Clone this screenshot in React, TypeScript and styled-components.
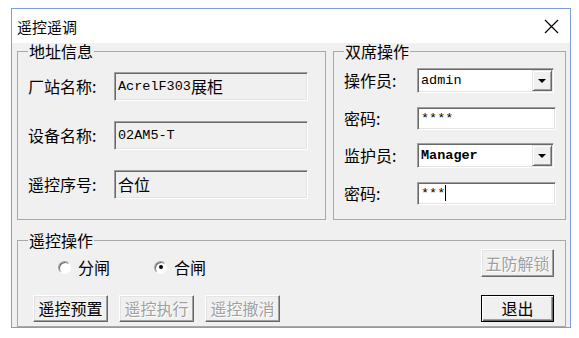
import styled, { createGlobalStyle } from "styled-components";

const GlobalStyle = createGlobalStyle`
  body {
    margin: 0;
    background: #fff;
    font-family: "Noto Sans CJK SC", "Liberation Sans", sans-serif;
  }
`;

const Window = styled.div`
  margin: 8px 0 0 11px;
  width: 560px;
  height: 320px;
  box-sizing: border-box;
  border: 1px solid #7d9be0;
  display: flex;
  flex-direction: column;
  overflow: hidden;
`;

const TitleBar = styled.div`
  height: 34px;
  flex: none;
  background: #fff;
  display: flex;
  align-items: center;
  justify-content: space-between;
  padding: 0 11px 0 5px;
  font-size: 15px;
  color: #000;
`;

const Body = styled.div`
  flex: 1;
  min-height: 0;
  background: #f0f0f0;
  padding: 0 4px 0 5px;
  display: flex;
  flex-direction: column;
  gap: 12px;
`;

const TopRow = styled.div`
  display: flex;
  gap: 7px;
  height: 177px;
  flex: none;
`;

const Group = styled.fieldset<{ $width?: number; $height: number; $pad: string }>`
  margin: 0;
  box-sizing: border-box;
  width: ${(p) => (p.$width ? `${p.$width}px` : "auto")};
  flex: ${(p) => (p.$width ? "none" : "1")};
  height: ${(p) => p.$height}px;
  border: 1px solid #a8a8a8;
  padding: ${(p) => p.$pad};
  min-width: 0;
`;

const Legend = styled.legend`
  padding: 0 1px;
  margin: 0;
  font-size: 16px;
  line-height: 17px;
  color: #000;
`;

const Rows = styled.div<{ $gap: number }>`
  display: flex;
  flex-direction: column;
  gap: ${(p) => p.$gap}px;
`;

const Row = styled.div<{ $h: number }>`
  display: flex;
  align-items: center;
  height: ${(p) => p.$h}px;
`;

const Label = styled.div<{ $w: number }>`
  width: ${(p) => p.$w}px;
  flex: none;
  font-size: 16px;
  line-height: 19px;
  color: #000;
  white-space: nowrap;
`;

const Sunken = styled.div<{ $w: number; $h: number; $bg: string }>`
  width: ${(p) => p.$w}px;
  height: ${(p) => p.$h}px;
  box-sizing: border-box;
  border: 1px solid;
  border-color: #a0a0a0 #fff #fff #a0a0a0;
  box-shadow: inset 1px 1px 0 #696969, inset -1px -1px 0 #e3e3e3;
  background: ${(p) => p.$bg};
  display: flex;
  align-items: center;
  padding: 1px 1px 1px 3px;
  font-family: "Liberation Mono", "Noto Sans CJK SC", monospace;
  font-size: 13.5px;
  color: #000;
  white-space: nowrap;
`;

const Cjk = styled.span`
  font-family: "Noto Sans CJK SC", sans-serif;
  font-size: 16px;
  line-height: 19px;
`;

const Value = styled.span<{ $bold?: boolean }>`
  flex: 1;
  font-weight: ${(p) => (p.$bold ? 700 : 400)};
`;

const Caret = styled.span`
  display: inline-block;
  width: 0;
  height: 16px;
  border-left: 1px solid #000;
  vertical-align: middle;
`;

const DropBtn = styled.div`
  width: 20px;
  height: 100%;
  box-sizing: border-box;
  border: 1px solid;
  border-color: #e3e3e3 #696969 #696969 #e3e3e3;
  box-shadow: inset 1px 1px 0 #fff, inset -1px -1px 0 #a0a0a0;
  background: #f0f0f0;
  display: flex;
  align-items: center;
  justify-content: center;
  &::after {
    content: "";
    border-left: 4px solid transparent;
    border-right: 4px solid transparent;
    border-top: 4px solid #000;
  }
`;

const OpRow = styled.div`
  display: flex;
  justify-content: space-between;
  height: 28px;
`;

const Radios = styled.div`
  align-self: flex-end;
  display: flex;
  gap: 44px;
  padding-left: 30px;
  height: 20px;
  align-items: center;
`;

const RadioItem = styled.label`
  display: flex;
  align-items: center;
  gap: 7px;
  font-size: 16px;
  line-height: 19px;
  color: #000;
`;

const RadioDot = styled.span<{ $on?: boolean }>`
  width: 13px;
  height: 13px;
  box-sizing: border-box;
  border-radius: 50%;
  border: 1px solid;
  border-color: #a0a0a0 #fff #fff #a0a0a0;
  box-shadow: inset 1px 1px 0 #696969;
  background: #fff;
  display: flex;
  align-items: center;
  justify-content: center;
  &::after {
    content: "";
    display: ${(p) => (p.$on ? "block" : "none")};
    width: 4px;
    height: 4px;
    border-radius: 50%;
    background: #000;
  }
`;

const ButtonRow = styled.div`
  display: flex;
  gap: 11px;
  margin-top: 18px;
  padding-left: 5px;
`;

const Button = styled.button<{ $w: number; $h: number; $default?: boolean; $push?: boolean }>`
  width: ${(p) => p.$w}px;
  height: ${(p) => p.$h}px;
  margin-left: ${(p) => (p.$push ? "auto" : "0")};
  box-sizing: border-box;
  padding: 0;
  background: #f0f0f0;
  font-family: "Noto Sans CJK SC", sans-serif;
  font-size: 16px;
  line-height: 19px;
  color: #000;
  border: 1px solid;
  border-color: ${(p) => (p.$default ? "#000" : "#fff #696969 #696969 #fff")};
  box-shadow: ${(p) =>
    p.$default
      ? "inset 1px 1px 0 #fff, inset -1px -1px 0 #696969, inset -2px -2px 0 #a0a0a0"
      : "inset -1px -1px 0 #a0a0a0, inset 1px 1px 0 #e3e3e3"};
  &:disabled {
    color: #a0a0a0;
    text-shadow: 1px 1px 0 #fff;
  }
`;

function CloseIcon() {
  return (
    <svg width="15" height="15" viewBox="0 0 15 15">
      <path d="M1 1 L14 14 M14 1 L1 14" stroke="#000" strokeWidth="1.2" fill="none" />
    </svg>
  );
}

function App() {
  return (
    <>
      <GlobalStyle />
      <Window>
        <TitleBar>
          <span>遥控遥调</span>
          <CloseIcon />
        </TitleBar>
        <Body>
          <TopRow>
            <Group $width={309} $height={177} $pad="12px 10px 0 10px">
              <Legend>地址信息</Legend>
              <Rows $gap={20}>
                <Row $h={29}>
                  <Label $w={86}>厂站名称:</Label>
                  <Sunken $w={194} $h={29} $bg="#f0f0f0">
                    AcrelF303<Cjk>展柜</Cjk>
                  </Sunken>
                </Row>
                <Row $h={29}>
                  <Label $w={86}>设备名称:</Label>
                  <Sunken $w={194} $h={29} $bg="#f0f0f0">
                    02AM5-T
                  </Sunken>
                </Row>
                <Row $h={29}>
                  <Label $w={86}>遥控序号:</Label>
                  <Sunken $w={194} $h={29} $bg="#f0f0f0">
                    <Cjk>合位</Cjk>
                  </Sunken>
                </Row>
              </Rows>
            </Group>
            <Group $height={177} $pad="8px 9px 0 10px">
              <Legend>双席操作</Legend>
              <Rows $gap={12.5}>
                <Row $h={25}>
                  <Label $w={73}>操作员:</Label>
                  <Sunken $w={137} $h={25} $bg="#fff">
                    <Value>admin</Value>
                    <DropBtn />
                  </Sunken>
                </Row>
                <Row $h={25}>
                  <Label $w={73}>密码:</Label>
                  <Sunken $w={139} $h={23} $bg="#fff">
                    ****
                  </Sunken>
                </Row>
                <Row $h={25}>
                  <Label $w={73}>监护员:</Label>
                  <Sunken $w={137} $h={25} $bg="#fff">
                    <Value $bold>Manager</Value>
                    <DropBtn />
                  </Sunken>
                </Row>
                <Row $h={25}>
                  <Label $w={73}>密码:</Label>
                  <Sunken $w={139} $h={23} $bg="#fff">
                    ***
                    <Caret />
                  </Sunken>
                </Row>
              </Rows>
            </Group>
          </TopRow>
          <Group $height={120} $pad="0 11px 0 10px">
            <Legend>遥控操作</Legend>
            <OpRow>
              <Radios>
                <RadioItem>
                  <RadioDot />
                  分闸
                </RadioItem>
                <RadioItem>
                  <RadioDot $on />
                  合闸
                </RadioItem>
              </Radios>
              <Button $w={73} $h={28} disabled>
                五防解锁
              </Button>
            </OpRow>
            <ButtonRow>
              <Button $w={75} $h={27}>遥控预置</Button>
              <Button $w={75} $h={27} disabled>
                遥控执行
              </Button>
              <Button $w={75} $h={27} disabled>
                遥控撤消
              </Button>
              <Button $w={73} $h={27} $default $push>
                退出
              </Button>
            </ButtonRow>
          </Group>
        </Body>
      </Window>
    </>
  );
}

export default App;
